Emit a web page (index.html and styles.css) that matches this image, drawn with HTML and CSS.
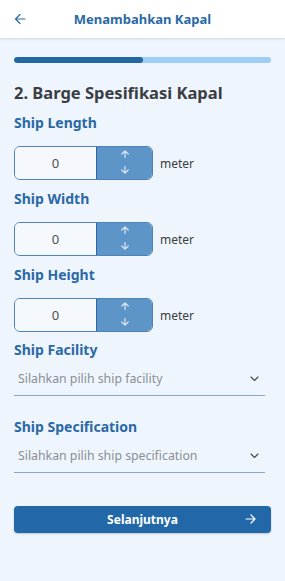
FILE: index.html
```html
<!DOCTYPE html>
<html>
<head>
<meta charset="utf-8">
<link rel="stylesheet" href="styles.css">
</head>
<body>
<header class="topbar">
  <span class="back">
    <svg width="12" height="12" viewBox="0 0 12 12"><path d="M11 6H1.5M6 1.5L1.5 6L6 10.5" fill="none" stroke="#2a69a6" stroke-width="1.2" stroke-linecap="round" stroke-linejoin="round"/></svg>
  </span>
  <h1 class="title">Menambahkan Kapal</h1>
</header>
<main class="content">
  <div class="progress"><div class="progress-fill" style="width:50%"></div></div>
  <h2 class="section-title">2. Barge Spesifikasi Kapal</h2>

  <div class="field">
    <label class="label">Ship Length</label>
    <div class="num-row">
      <div class="num">
        <div class="num-value">0</div>
        <div class="num-btns">
          <svg width="8" height="8" viewBox="0 0 8 8"><path d="M4 7.5V0.8M0.8 4L4 0.8L7.2 4" fill="none" stroke="#dbe8f6" stroke-width="1.2" stroke-linecap="round" stroke-linejoin="round"/></svg>
          <svg width="8" height="8" viewBox="0 0 8 8"><path d="M4 0.5V7.2M0.8 4L4 7.2L7.2 4" fill="none" stroke="#dbe8f6" stroke-width="1.2" stroke-linecap="round" stroke-linejoin="round"/></svg>
        </div>
      </div>
      <span class="unit">meter</span>
    </div>
  </div>

  <div class="field">
    <label class="label">Ship Width</label>
    <div class="num-row">
      <div class="num">
        <div class="num-value">0</div>
        <div class="num-btns">
          <svg width="8" height="8" viewBox="0 0 8 8"><path d="M4 7.5V0.8M0.8 4L4 0.8L7.2 4" fill="none" stroke="#dbe8f6" stroke-width="1.2" stroke-linecap="round" stroke-linejoin="round"/></svg>
          <svg width="8" height="8" viewBox="0 0 8 8"><path d="M4 0.5V7.2M0.8 4L4 7.2L7.2 4" fill="none" stroke="#dbe8f6" stroke-width="1.2" stroke-linecap="round" stroke-linejoin="round"/></svg>
        </div>
      </div>
      <span class="unit">meter</span>
    </div>
  </div>

  <div class="field">
    <label class="label">Ship Height</label>
    <div class="num-row">
      <div class="num">
        <div class="num-value">0</div>
        <div class="num-btns">
          <svg width="8" height="8" viewBox="0 0 8 8"><path d="M4 7.5V0.8M0.8 4L4 0.8L7.2 4" fill="none" stroke="#dbe8f6" stroke-width="1.2" stroke-linecap="round" stroke-linejoin="round"/></svg>
          <svg width="8" height="8" viewBox="0 0 8 8"><path d="M4 0.5V7.2M0.8 4L4 7.2L7.2 4" fill="none" stroke="#dbe8f6" stroke-width="1.2" stroke-linecap="round" stroke-linejoin="round"/></svg>
        </div>
      </div>
      <span class="unit">meter</span>
    </div>
  </div>

  <div class="field select-field">
    <label class="label">Ship Facility</label>
    <div class="select">
      <span class="placeholder">Silahkan pilih ship facility</span>
      <svg width="9" height="6" viewBox="0 0 9 6"><path d="M1 1L4.5 4.5L8 1" fill="none" stroke="#44474c" stroke-width="1.1" stroke-linecap="round" stroke-linejoin="round"/></svg>
    </div>
  </div>

  <div class="field select-field second">
    <label class="label">Ship Specification</label>
    <div class="select">
      <span class="placeholder">Silahkan pilih ship specification</span>
      <svg width="9" height="6" viewBox="0 0 9 6"><path d="M1 1L4.5 4.5L8 1" fill="none" stroke="#44474c" stroke-width="1.1" stroke-linecap="round" stroke-linejoin="round"/></svg>
    </div>
  </div>

  <button class="next">
    <span class="next-text">Selanjutnya</span>
    <svg class="next-arrow" width="11" height="10" viewBox="0 0 11 10"><path d="M1 5H10M6 1L10 5L6 9" fill="none" stroke="#fff" stroke-width="1.2" stroke-linecap="round" stroke-linejoin="round"/></svg>
  </button>
</main>
</body>
</html>
```
FILE: styles.css
```css
* { box-sizing: border-box; }
html, body { margin: 0; padding: 0; }
body {
  width: 285px;
  height: 581px;
  background: #eff5fc;
  font-family: "Noto Sans", "Open Sans", sans-serif;
  overflow: hidden;
}
.topbar {
  height: 38px;
  background: #ffffff;
  box-shadow: 0 1px 2px rgba(0,0,0,0.12);
  display: flex;
  align-items: center;
  position: relative;
  padding-left: 14px;
}
.back { display: flex; align-items: center; width: 12px; }
.title {
  margin: 0;
  flex: 1;
  text-align: center;
  padding-right: 26px;
  font-size: 13px;
  font-weight: 700;
  color: #2a69a6;
}
.content {
  padding: 19px 14px 0 14px;
  display: flex;
  flex-direction: column;
}
.progress {
  height: 6px;
  border-radius: 3px;
  background: #9ecdf5;
  overflow: hidden;
}
.progress-fill {
  height: 100%;
  background: #2367a3;
  border-radius: 3px;
}
.section-title {
  margin: 19px 0 0 0;
  font-size: 16.5px;
  line-height: 22px;
  font-weight: 700;
  color: #3a3e43;
}
.field { display: flex; flex-direction: column; }
.label {
  margin-top: 9px;
  font-size: 14px;
  line-height: 20px;
  font-weight: 700;
  color: #2a69a6;
}
.num-row {
  display: flex;
  align-items: center;
  margin-top: 13px;
}
.num {
  width: 139px;
  height: 34px;
  display: flex;
  border: 1px solid #4f82b6;
  border-radius: 6px;
  overflow: hidden;
}
.num-value {
  width: 82px;
  display: flex;
  align-items: center;
  justify-content: center;
  font-size: 13px;
  color: #4a4d52;
  background: #f5f9fd;
  border-right: 1px solid #2a69a6;
}
.num-btns {
  flex: 1;
  background: #5e95c8;
  display: flex;
  flex-direction: column;
  align-items: center;
  justify-content: space-between;
  padding: 3px 0 5px 0;
}
.unit {
  margin-left: 7px;
  font-size: 12px;
  color: #3a3e43;
}
.select-field .label { margin-top: 8px; }
.select-field.second .label { margin-top: 21px; }
.select {
  display: flex;
  align-items: center;
  justify-content: space-between;
  height: 36px;
  margin-right: 6px;
  padding: 2px 6px 0 4px;
  border-bottom: 1px solid #86a9cb;
}
.placeholder {
  font-size: 12.3px;
  color: #8a8f96;
}
.next {
  margin-top: 33px;
  height: 27px;
  border: none;
  border-radius: 4px;
  background: #2268a8;
  box-shadow: 0 1px 2px rgba(0,0,0,0.2);
  display: flex;
  align-items: center;
  justify-content: center;
  position: relative;
  padding: 0;
  font-family: inherit;
}
.next-text {
  font-size: 12px;
  font-weight: 700;
  color: #ffffff;
}
.next-arrow {
  position: absolute;
  right: 15px;
  top: 8px;
}
```
